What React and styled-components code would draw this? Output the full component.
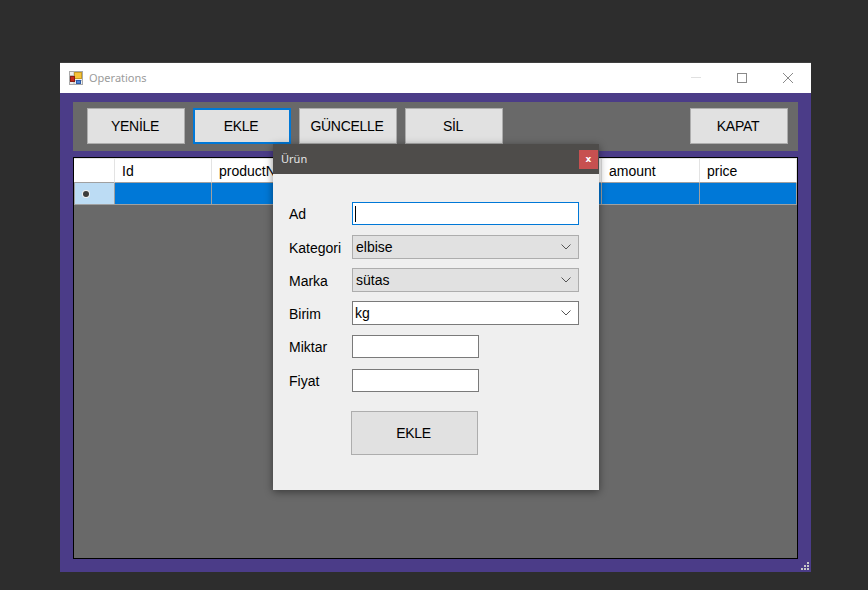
import React from 'react';
import styled, { createGlobalStyle } from 'styled-components';

const GlobalStyle = createGlobalStyle`
  html, body {
    margin: 0;
    background: #2d2d2d;
  }
  * {
    box-sizing: border-box;
  }
`;

const Page = styled.div`
  width: 868px;
  height: 590px;
  padding: 63px 0 0 60px;
  overflow: hidden;
  font-family: "Liberation Sans", Arial, sans-serif;
  font-size: 14px;
  color: #000;
`;

const Window = styled.div`
  position: relative;
  display: flex;
  flex-direction: column;
  width: 751px;
  height: 509px;
  background: #4b3c88;
  box-shadow: 0 -1px 0 #3f3f3f;
`;

const TitleBar = styled.div`
  display: flex;
  align-items: center;
  flex: 0 0 30px;
  padding-left: 9px;
  background: #fff;
`;

const TitleText = styled.span`
  margin: -2px 0 0 6px;
  font-family: "Noto Sans", "Open Sans", sans-serif;
  font-size: 11px;
  color: #9b9b9b;
`;

const WinButtons = styled.div`
  display: flex;
  margin-left: auto;
`;

const WinButton = styled.div`
  display: flex;
  align-items: center;
  justify-content: center;
  width: 46px;
  height: 30px;
`;

const Content = styled.div`
  display: flex;
  flex-direction: column;
  flex: 1;
  gap: 6px;
  padding: 9px 13px 13px;
`;

const Toolbar = styled.div`
  display: flex;
  gap: 8px;
  flex: 0 0 49px;
  padding: 6px 10px 7px 14px;
  background: #696969;
`;

const ToolButton = styled.div`
  display: flex;
  align-items: center;
  justify-content: center;
  width: ${p => p.$width || 98}px;
  height: 36px;
  padding-right: 2px;
  margin-left: ${p => (p.$right ? 'auto' : '0')};
  letter-spacing: -0.3px;
  background: #e1e1e1;
  border: ${p => (p.$focused ? '2px solid #0078d7' : '1px solid #adadad')};
`;

const Grid = styled.div`
  flex: 1;
  background: #696969;
  border: 1px solid #000;
`;

const GridRow = styled.div`
  display: grid;
  grid-template-columns: 41px repeat(3, 97px) 97px 99px 98px 1fr;
  height: ${p => p.$height}px;
`;

const HeaderCell = styled.div`
  display: flex;
  align-items: center;
  padding-left: 7px;
  padding-top: 1px;
  background: #fff;
  border-top: 1px solid #e3e3e3;
  border-right: 1px solid #e3e3e3;
  border-bottom: 1px solid #a0a0a0;
`;

const RowHeader = styled.div`
  display: flex;
  align-items: center;
  padding-left: 8px;
  background: #bcdcf4;
  border: 1px solid #a0a0a0;
  border-top: 0;
`;

const RowMark = styled.div`
  width: 6px;
  height: 6px;
  border-radius: 50%;
  background: #3c3c3c;
  box-shadow: 0 0 0 1px #eee;
`;

const DataCell = styled.div`
  background: #0078d7;
  border-right: 1px solid #a0a0a0;
  border-bottom: 1px solid #a0a0a0;
`;

const Grip = styled.svg`
  position: absolute;
  right: 1px;
  bottom: 1px;
`;

const Dialog = styled.div`
  position: absolute;
  left: 213px;
  top: 81px;
  display: flex;
  flex-direction: column;
  width: 326px;
  height: 346px;
  background: #efefef;
  box-shadow: 0 2px 8px rgba(0, 0, 0, 0.45);
`;

const DialogBar = styled.div`
  display: flex;
  align-items: center;
  justify-content: space-between;
  flex: 0 0 30px;
  padding: 0 1px 2px 8px;
  background: #4e4c4a;
  color: #e6e6e6;
  font-family: "Noto Sans", "Open Sans", sans-serif;
  font-size: 11px;
`;

const CloseButton = styled.div`
  display: flex;
  align-items: center;
  justify-content: center;
  width: 19px;
  height: 19px;
  margin-top: 2px;
  background: #c75050;
  color: #fff;
  font-family: "DejaVu Sans", sans-serif;
  font-size: 9px;
  font-weight: 700;
`;

const Form = styled.div`
  display: flex;
  flex-direction: column;
  padding: 28px 0 0 16px;
`;

const FormRow = styled.div`
  display: flex;
  align-items: center;
  height: ${p => p.$height || 24}px;
  margin-bottom: ${p => p.$gap ?? 9}px;
`;

const Label = styled.div`
  width: 63px;
  padding-top: ${p => (p.$raised ? 0 : 2)}px;
`;

const TextBox = styled.div`
  display: flex;
  align-items: center;
  width: ${p => p.$width}px;
  height: 100%;
  padding-left: 2px;
  background: #fff;
  border: 1px solid ${p => (p.$focused ? '#0078d7' : '#7a7a7a')};
`;

const Caret = styled.div`
  width: 1px;
  height: 16px;
  background: #000;
`;

const Combo = styled.div`
  display: flex;
  align-items: center;
  justify-content: space-between;
  width: 227px;
  height: 100%;
  padding: 0 7px 0 ${p => (p.$editable ? 2 : 3)}px;
  background: ${p => (p.$editable ? '#fff' : '#e1e1e1')};
  border: 1px solid ${p => (p.$editable ? '#7a7a7a' : '#adadad')};
`;

const SubmitButton = styled.div`
  display: flex;
  align-items: center;
  justify-content: center;
  width: 127px;
  height: 44px;
  margin: 10px 0 0 62px;
  padding-right: 2px;
  letter-spacing: -0.3px;
  background: #e1e1e1;
  border: 1px solid #adadad;
`;

const AppIcon = () => (
  <svg width="14" height="14" viewBox="0 0 14 14">
    <rect x="0.5" y="0.5" width="13" height="13" fill="#eeeeee" stroke="#a8a8a8" />
    <path d="M5 0.5 V13.5 M0.5 4.5 H5 M0.5 10.5 H5 M5 9.5 H13.5" stroke="#b8b8b8" fill="none" />
    <rect x="5.5" y="1.5" width="7" height="6" fill="#f6c33a" stroke="#c79a22" />
    <rect x="1.5" y="5.5" width="4" height="5" fill="#c62a1e" stroke="#8a1d14" />
    <rect x="7.5" y="9.5" width="4" height="3" fill="#4f86d8" stroke="#2d5ba8" />
  </svg>
);

const Chevron = () => (
  <svg width="10" height="6" viewBox="0 0 10 6">
    <path d="M0.5 0.5 L5 5 L9.5 0.5" fill="none" stroke="#555" strokeWidth="1" />
  </svg>
);

const columns = ['Id', 'productName', 'categoryId', 'brandId', 'unitId', 'amount', 'price'];

export default function App() {
  return (
    <Page>
      <GlobalStyle />
      <Window>
        <TitleBar>
          <AppIcon />
          <TitleText>Operations</TitleText>
          <WinButtons>
            <WinButton>
              <svg width="10" height="10" viewBox="0 0 10 10">
                <path d="M0 4.5 H10" stroke="#e0e0e0" />
              </svg>
            </WinButton>
            <WinButton>
              <svg width="10" height="10" viewBox="0 0 10 10">
                <rect x="0.5" y="0.5" width="9" height="9" fill="none" stroke="#8a8a8a" />
              </svg>
            </WinButton>
            <WinButton>
              <svg width="10" height="10" viewBox="0 0 10 10">
                <path d="M0 0 L10 10 M10 0 L0 10" stroke="#8a8a8a" />
              </svg>
            </WinButton>
          </WinButtons>
        </TitleBar>
        <Content>
          <Toolbar>
            <ToolButton>YENİLE</ToolButton>
            <ToolButton $focused>EKLE</ToolButton>
            <ToolButton>GÜNCELLE</ToolButton>
            <ToolButton>SİL</ToolButton>
            <ToolButton $right>KAPAT</ToolButton>
          </Toolbar>
          <Grid>
            <GridRow $height={25}>
              <HeaderCell />
              {columns.map(name => (
                <HeaderCell key={name}>{name}</HeaderCell>
              ))}
            </GridRow>
            <GridRow $height={22}>
              <RowHeader>
                <RowMark />
              </RowHeader>
              {columns.map(name => (
                <DataCell key={name} />
              ))}
            </GridRow>
          </Grid>
        </Content>
        <Grip width="9" height="9" viewBox="0 0 9 9">
          <path d="M6 0h2v2H6zM3 3h2v2H3zM6 3h2v2H6zM0 6h2v2H0zM3 6h2v2H3zM6 6h2v2H6z" fill="#c8c8c8" />
        </Grip>
        <Dialog>
          <DialogBar>
            <span>Ürün</span>
            <CloseButton>x</CloseButton>
          </DialogBar>
          <Form>
            <FormRow $gap={10} $height={23}>
              <Label $raised>Ad</Label>
              <TextBox $width={227} $focused>
                <Caret />
              </TextBox>
            </FormRow>
            <FormRow>
              <Label>Kategori</Label>
              <Combo>
                elbise
                <Chevron />
              </Combo>
            </FormRow>
            <FormRow>
              <Label>Marka</Label>
              <Combo>
                sütas
                <Chevron />
              </Combo>
            </FormRow>
            <FormRow $gap={10}>
              <Label>Birim</Label>
              <Combo $editable>
                kg
                <Chevron />
              </Combo>
            </FormRow>
            <FormRow $gap={11} $height={23}>
              <Label $raised>Miktar</Label>
              <TextBox $width={127} />
            </FormRow>
            <FormRow $gap={9} $height={23}>
              <Label $raised>Fiyat</Label>
              <TextBox $width={127} />
            </FormRow>
            <SubmitButton>EKLE</SubmitButton>
          </Form>
        </Dialog>
      </Window>
    </Page>
  );
}
